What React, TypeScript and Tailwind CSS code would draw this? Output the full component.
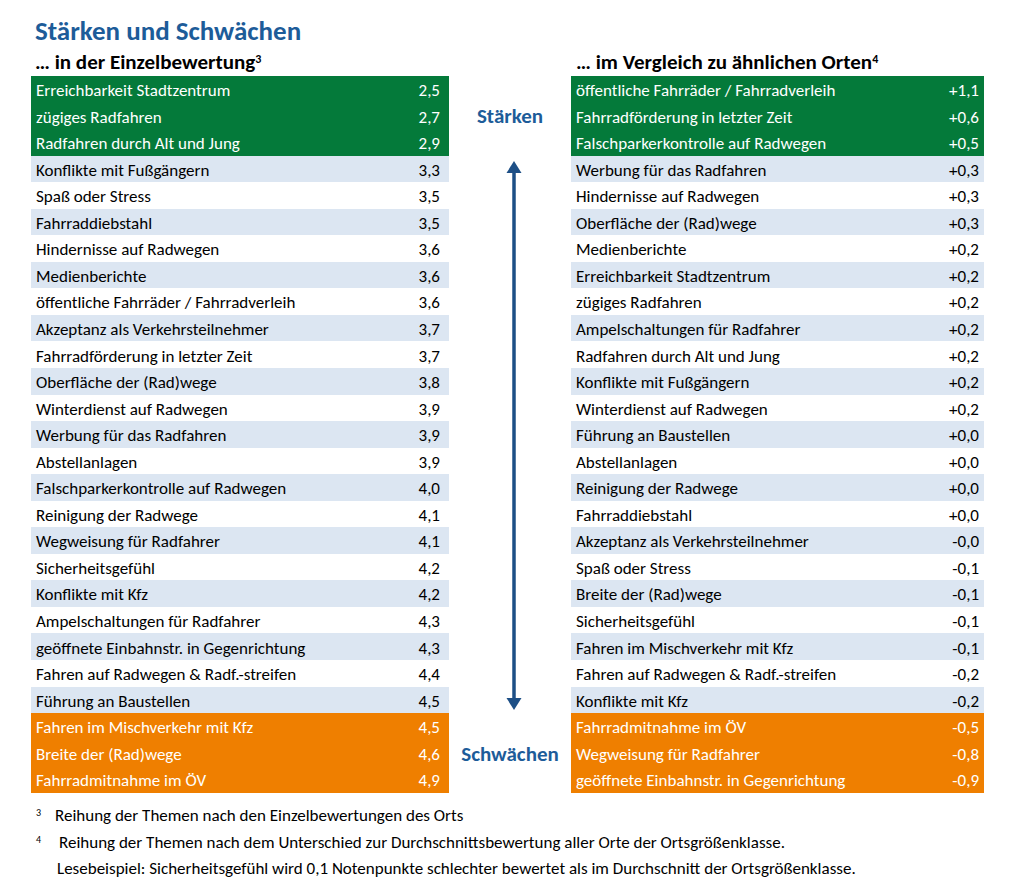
import React from "react";

type Row = [string, string];

const LEFT: Row[] = [
  ["Erreichbarkeit Stadtzentrum", "2,5"],
  ["zügiges Radfahren", "2,7"],
  ["Radfahren durch Alt und Jung", "2,9"],
  ["Konflikte mit Fußgängern", "3,3"],
  ["Spaß oder Stress", "3,5"],
  ["Fahrraddiebstahl", "3,5"],
  ["Hindernisse auf Radwegen", "3,6"],
  ["Medienberichte", "3,6"],
  ["öffentliche Fahrräder / Fahrradverleih", "3,6"],
  ["Akzeptanz als Verkehrsteilnehmer", "3,7"],
  ["Fahrradförderung in letzter Zeit", "3,7"],
  ["Oberfläche der (Rad)wege", "3,8"],
  ["Winterdienst auf Radwegen", "3,9"],
  ["Werbung für das Radfahren", "3,9"],
  ["Abstellanlagen", "3,9"],
  ["Falschparkerkontrolle auf Radwegen", "4,0"],
  ["Reinigung der Radwege", "4,1"],
  ["Wegweisung für Radfahrer", "4,1"],
  ["Sicherheitsgefühl", "4,2"],
  ["Konflikte mit Kfz", "4,2"],
  ["Ampelschaltungen für Radfahrer", "4,3"],
  ["geöffnete Einbahnstr. in Gegenrichtung", "4,3"],
  ["Fahren auf Radwegen & Radf.-streifen", "4,4"],
  ["Führung an Baustellen", "4,5"],
  ["Fahren im Mischverkehr mit Kfz", "4,5"],
  ["Breite der (Rad)wege", "4,6"],
  ["Fahrradmitnahme im ÖV", "4,9"],
];

const RIGHT: Row[] = [
  ["öffentliche Fahrräder / Fahrradverleih", "+1,1"],
  ["Fahrradförderung in letzter Zeit", "+0,6"],
  ["Falschparkerkontrolle auf Radwegen", "+0,5"],
  ["Werbung für das Radfahren", "+0,3"],
  ["Hindernisse auf Radwegen", "+0,3"],
  ["Oberfläche der (Rad)wege", "+0,3"],
  ["Medienberichte", "+0,2"],
  ["Erreichbarkeit Stadtzentrum", "+0,2"],
  ["zügiges Radfahren", "+0,2"],
  ["Ampelschaltungen für Radfahrer", "+0,2"],
  ["Radfahren durch Alt und Jung", "+0,2"],
  ["Konflikte mit Fußgängern", "+0,2"],
  ["Winterdienst auf Radwegen", "+0,2"],
  ["Führung an Baustellen", "+0,0"],
  ["Abstellanlagen", "+0,0"],
  ["Reinigung der Radwege", "+0,0"],
  ["Fahrraddiebstahl", "+0,0"],
  ["Akzeptanz als Verkehrsteilnehmer", "-0,0"],
  ["Spaß oder Stress", "-0,1"],
  ["Breite der (Rad)wege", "-0,1"],
  ["Sicherheitsgefühl", "-0,1"],
  ["Fahren im Mischverkehr mit Kfz", "-0,1"],
  ["Fahren auf Radwegen & Radf.-streifen", "-0,2"],
  ["Konflikte mit Kfz", "-0,2"],
  ["Fahrradmitnahme im ÖV", "-0,5"],
  ["Wegweisung für Radfahrer", "-0,8"],
  ["geöffnete Einbahnstr. in Gegenrichtung", "-0,9"],
];

function rowClass(i: number) {
  if (i < 3) return "bg-[#047a3a] text-white";
  if (i >= 24) return "bg-[#ef7f00] text-white";
  return i % 2 === 1 ? "bg-[#dce6f2] text-black" : "bg-white text-black";
}

function Table({ rows, right }: { rows: Row[]; right?: boolean }) {
  return (
    <div className={right ? "w-[413px]" : "w-[418px]"}>
      {rows.map(([label, val], i) => (
        <div
          key={i}
          className={`flex h-[26.55px] items-center justify-between pt-[3px] pl-[5px] ${
            right ? "pr-[5px]" : "pr-[9px]"
          } ${rowClass(i)}`}
        >
          <span>{label}</span>
          <span>{val}</span>
        </div>
      ))}
    </div>
  );
}

export default function App() {
  return (
    <div
      className="min-h-[887px] w-[1024px] bg-white pl-[31px] pt-[13px] text-black"
      style={{ fontFamily: "Carlito, Lato, 'Liberation Sans', sans-serif" }}
    >
      <h1 className="pl-[4px] text-[27px] leading-[35px] font-bold text-[#1d5c99]">
        Stärken und Schwächen
      </h1>
      <div className="flex text-[21px] leading-[28px] font-bold">
        <div className="w-[540px] pl-[4px]">
          … in der Einzelbewertung<sup className="text-[12px]">3</sup>
        </div>
        <div className="pl-[5px]">
          … im Vergleich zu ähnlichen Orten<sup className="text-[12px]">4</sup>
        </div>
      </div>

      <div className="flex text-[17px]">
        <Table rows={LEFT} />
        <div className="flex w-[122px] flex-col text-[21px] font-bold text-[#1d5c99]">
          <div className="flex h-[80px] items-center justify-center pt-[2px]">Stärken</div>
          <div className="flex flex-1 justify-center py-[5px] pl-[7px]">
            <svg width="16" height="549" viewBox="0 0 16 549">
              <line x1="8" y1="10" x2="8" y2="539" stroke="#1d4f86" strokeWidth="3.5" />
              <polygon points="8,0 15.5,12 0.5,12" fill="#1d4f86" />
              <polygon points="8,549 15.5,537 0.5,537" fill="#1d4f86" />
            </svg>
          </div>
          <div className="flex h-[80px] items-center justify-center">Schwächen</div>
        </div>
        <Table rows={RIGHT} right />
      </div>

      <div className="mt-[8px] pl-[5px] text-[17px] leading-[26.5px]">
        <div className="flex">
          <span className="w-[19px] text-[10px] leading-[20px]">3</span>
          <span>Reihung der Themen nach den Einzelbewertungen des Orts</span>
        </div>
        <div className="flex">
          <span className="w-[23px] text-[10px] leading-[20px]">4</span>
          <span>
            Reihung der Themen nach dem Unterschied zur Durchschnittsbewertung aller Orte der
            Ortsgrößenklasse.
          </span>
        </div>
        <div className="pl-[21px]">
          Lesebeispiel: Sicherheitsgefühl wird 0,1 Notenpunkte schlechter bewertet als im
          Durchschnitt der Ortsgrößenklasse.
        </div>
      </div>
    </div>
  );
}
